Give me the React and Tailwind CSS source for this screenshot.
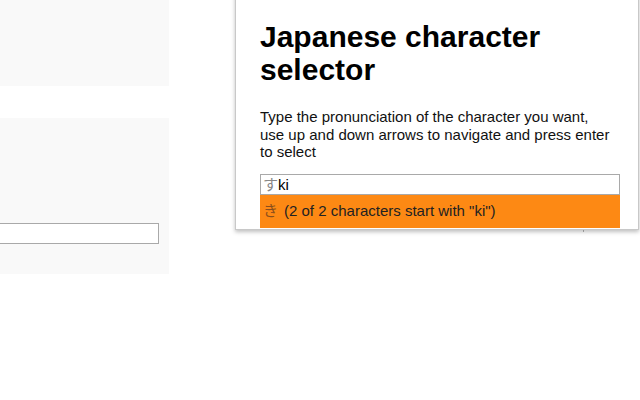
export default function App() {
  return (
    <div
      className="relative w-[640px] h-[400px] overflow-hidden bg-white"
      style={{ fontFamily: '"Liberation Sans", Arial, "Noto Sans CJK JP", sans-serif' }}
    >
      {/* page behind */}
      <div className="flex flex-col gap-[32px] w-[169px]">
        <div className="h-[86px] bg-[#f9f9f9]"></div>
        <div className="h-[156px] bg-[#f9f9f9] pt-[105px] pr-[10px]">
          <div className="h-[21px] -ml-[20px] border border-[#a9a9a9] bg-white"></div>
        </div>
      </div>
      <div className="absolute left-[583px] top-[226px] w-px h-[6px] bg-[#b5b5b5]"></div>

      {/* selector popup */}
      <div className="absolute left-[235px] -top-[10px] w-[404px] h-[240px] bg-white border border-[#c8c8c8] shadow-[0_2px_4px_rgba(0,0,0,0.25)] overflow-hidden">
        <div className="pl-[24px] pr-[18px] pt-[29px]">
          <h1 className="text-[30px] leading-[33px] font-bold text-black">
            Japanese character selector
          </h1>
          <p className="mt-[22px] w-[353px] text-[15px] leading-[17.5px] text-[#111]">
            Type the pronunciation of the character you want, use up and down arrows to navigate and press enter to select
          </p>
          <div className="mt-[13px] w-[360px] h-[21px] border border-[#a9a9a9] flex items-center px-[2px] text-[15px] leading-none">
            <span className="text-[#888]">す</span>
            <span className="text-black">ki</span>
          </div>
          <div className="w-[360px] h-[33px] bg-[#fd8914] flex items-center px-[3px] text-[15px] text-[#222]">
            <span className="text-[#8a4e1c] mr-[6px]">き</span>
            <span>(2 of 2 characters start with "ki")</span>
          </div>
        </div>
      </div>
    </div>
  );
}
